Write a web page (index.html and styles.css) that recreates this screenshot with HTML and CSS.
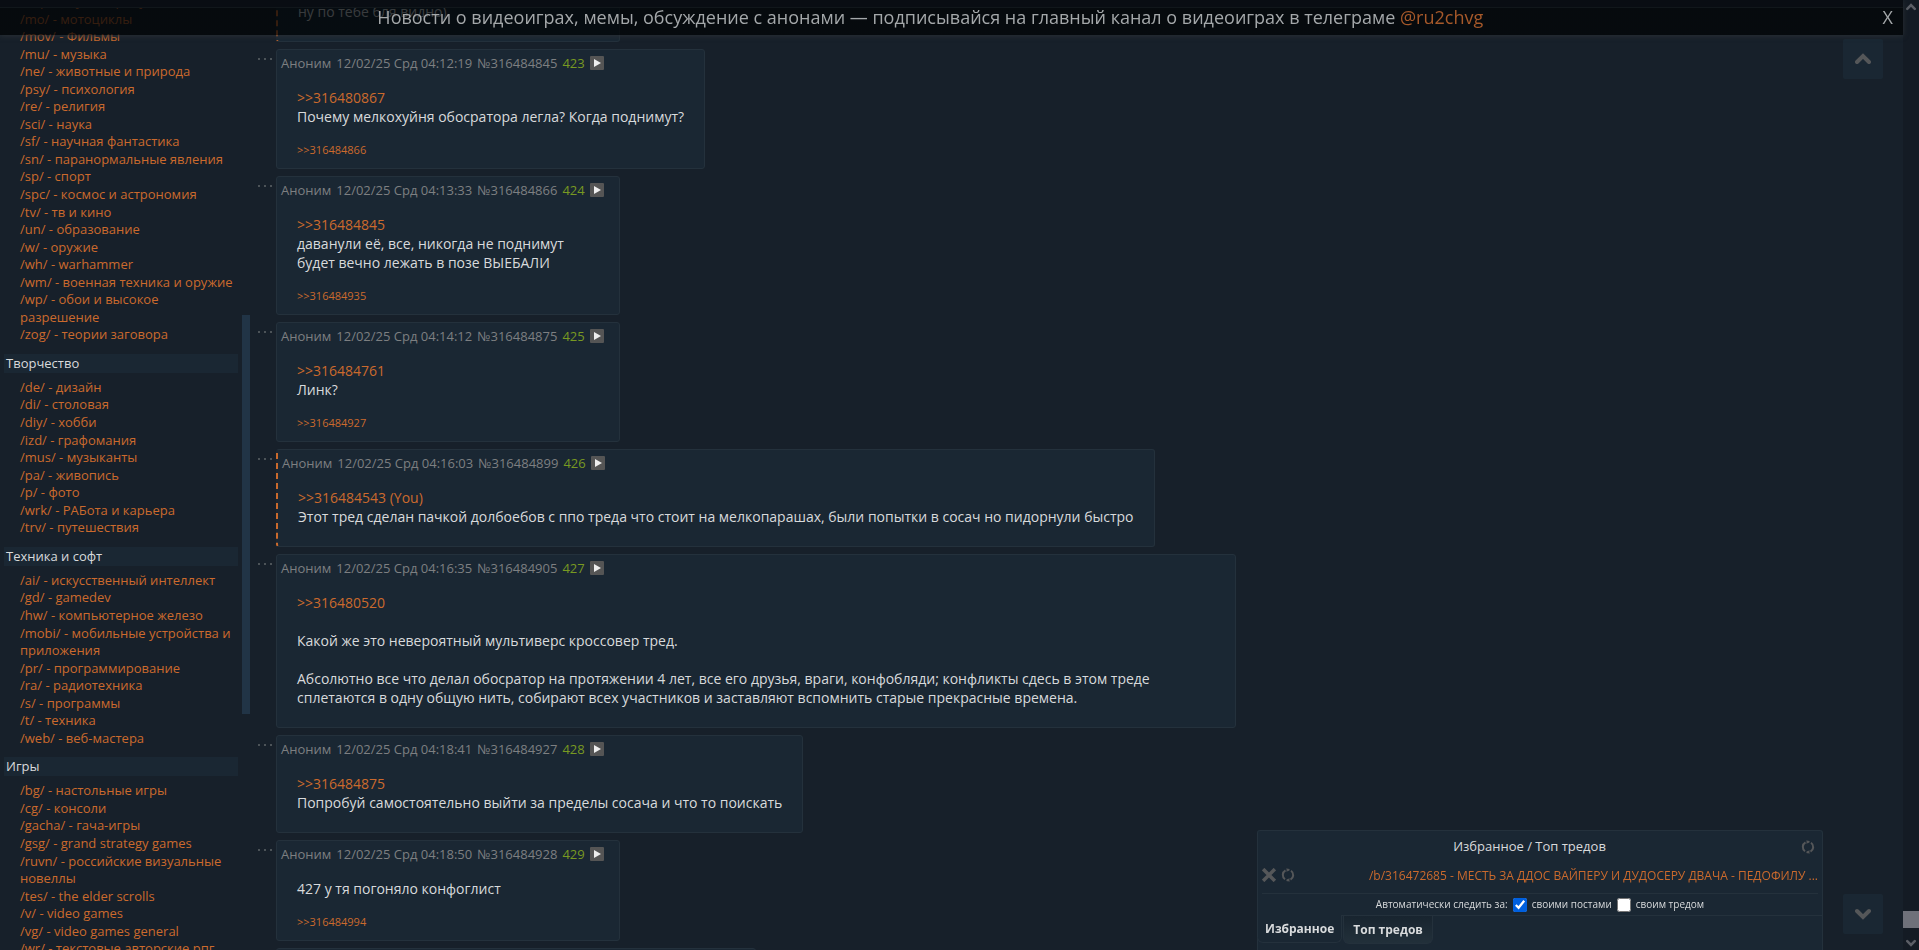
FILE: index.html
```html
<!DOCTYPE html>
<html lang="ru">
<head>
<meta charset="utf-8">
<title>Тред</title>
<link rel="stylesheet" href="styles.css">
</head>
<body>
<svg class="defs" aria-hidden="true">
  <symbol id="i-play" viewBox="0 0 14 14"><rect width="14" height="14" rx="1" fill="#555"/><path d="M4 3v8l7-4z" fill="#eee"/></symbol>
  <symbol id="i-dots" viewBox="0 0 16 4"><path d="M1 1h2v2H1zM7 1h2v2H7zM13 1h2v2h-2z" fill="#4c5358"/></symbol>
  <symbol id="i-refresh" viewBox="0 0 14 14"><g fill="none" stroke="currentColor" stroke-width="2"><path d="M4.500 2.400A5.200 5.200 0 0 0 4 11.200"/><path d="M9.500 11.600A5.200 5.200 0 0 0 10 2.800"/><path d="M6 1.900A5.200 5.200 0 0 1 8.400 2"/><path d="M5.600 12A5.200 5.200 0 0 0 8 12.100"/></g><path d="M5.600 0v4L8 2zM8.400 14v-4L6 12z" fill="currentColor"/></symbol>
  <symbol id="i-cross" viewBox="0 0 12 12"><path d="M2 2l8 8M10 2l-8 8" fill="none" stroke="currentColor" stroke-width="3" stroke-linecap="square"/></symbol>
  <symbol id="i-up" viewBox="0 0 16 12"><path d="M2 9l6-6 6 6" fill="none" stroke="currentColor" stroke-width="4" stroke-linecap="round"/></symbol>
  <symbol id="i-down" viewBox="0 0 16 12"><path d="M2 3l6 6 6-6" fill="none" stroke="currentColor" stroke-width="4" stroke-linecap="round"/></symbol>
</svg>

<header class="promo">
  <p class="promo-text">Новости о видеоиграх, мемы, обсуждение с анонами — подписывайся на главный канал о видеоиграх в телеграме <a href="#">@ru2chvg</a></p>
  <button class="promo-close" type="button">X</button>
</header>

<div class="page">
  <nav class="boards">
    <div class="boards-scroll">
      <ul>
        <li><a href="#">/mlp/ - my little pony</a></li>
        <li><a href="#">/mo/ - мотоциклы</a></li>
        <li><a href="#">/mov/ - Фильмы</a></li>
        <li><a href="#">/mu/ - музыка</a></li>
        <li><a href="#">/ne/ - животные и природа</a></li>
        <li><a href="#">/psy/ - психология</a></li>
        <li><a href="#">/re/ - религия</a></li>
        <li><a href="#">/sci/ - наука</a></li>
        <li><a href="#">/sf/ - научная фантастика</a></li>
        <li><a href="#">/sn/ - паранормальные явления</a></li>
        <li><a href="#">/sp/ - спорт</a></li>
        <li><a href="#">/spc/ - космос и астрономия</a></li>
        <li><a href="#">/tv/ - тв и кино</a></li>
        <li><a href="#">/un/ - образование</a></li>
        <li><a href="#">/w/ - оружие</a></li>
        <li><a href="#">/wh/ - warhammer</a></li>
        <li><a href="#">/wm/ - военная техника и оружие</a></li>
        <li><a href="#">/wp/ - обои и высокое разрешение</a></li>
        <li><a href="#">/zog/ - теории заговора</a></li>
      </ul>
      <h2>Творчество</h2>
      <ul>
        <li><a href="#">/de/ - дизайн</a></li>
        <li><a href="#">/di/ - столовая</a></li>
        <li><a href="#">/diy/ - хобби</a></li>
        <li><a href="#">/izd/ - графомания</a></li>
        <li><a href="#">/mus/ - музыканты</a></li>
        <li><a href="#">/pa/ - живопись</a></li>
        <li><a href="#">/p/ - фото</a></li>
        <li><a href="#">/wrk/ - РАБота и карьера</a></li>
        <li><a href="#">/trv/ - путешествия</a></li>
      </ul>
      <h2>Техника и софт</h2>
      <ul>
        <li><a href="#">/ai/ - искусственный интеллект</a></li>
        <li><a href="#">/gd/ - gamedev</a></li>
        <li><a href="#">/hw/ - компьютерное железо</a></li>
        <li><a href="#">/mobi/ - мобильные устройства и приложения</a></li>
        <li><a href="#">/pr/ - программирование</a></li>
        <li><a href="#">/ra/ - радиотехника</a></li>
        <li><a href="#">/s/ - программы</a></li>
        <li><a href="#">/t/ - техника</a></li>
        <li><a href="#">/web/ - веб-мастера</a></li>
      </ul>
      <h2>Игры</h2>
      <ul>
        <li><a href="#">/bg/ - настольные игры</a></li>
        <li><a href="#">/cg/ - консоли</a></li>
        <li><a href="#">/gacha/ - гача-игры</a></li>
        <li><a href="#">/gsg/ - grand strategy games</a></li>
        <li><a href="#">/ruvn/ - российские визуальные новеллы</a></li>
        <li><a href="#">/tes/ - the elder scrolls</a></li>
        <li><a href="#">/v/ - video games</a></li>
        <li><a href="#">/vg/ - video games general</a></li>
        <li><a href="#">/wr/ - текстовые авторские рпг</a></li>
      </ul>
    </div>
    <span class="boards-thumb"></span>
  </nav>

  <main class="thread">
    <div class="row row-first">
      <article class="post post-reply">
        <div class="message">ну по тебе бля видно)</div>
      </article>
    </div>

    <div class="row">
      <button class="menu" type="button" aria-label="Меню поста"><svg><use href="#i-dots"/></svg></button>
      <article class="post">
        <div class="details"><span>Аноним</span><span>12/02/25 Срд 04:12:19</span><span>№316484845</span><b>423</b><button type="button" aria-label="Ответить"><svg><use href="#i-play"/></svg></button></div>
        <div class="message"><a href="#">&gt;&gt;316480867</a><br>Почему мелкохуйня обосратора легла? Когда поднимут?</div>
        <div class="refs"><a href="#">&gt;&gt;316484866</a></div>
      </article>
    </div>

    <div class="row">
      <button class="menu" type="button" aria-label="Меню поста"><svg><use href="#i-dots"/></svg></button>
      <article class="post">
        <div class="details"><span>Аноним</span><span>12/02/25 Срд 04:13:33</span><span>№316484866</span><b>424</b><button type="button" aria-label="Ответить"><svg><use href="#i-play"/></svg></button></div>
        <div class="message"><a href="#">&gt;&gt;316484845</a><br>даванули её, все, никогда не поднимут<br>будет вечно лежать в позе ВЫЕБАЛИ</div>
        <div class="refs"><a href="#">&gt;&gt;316484935</a></div>
      </article>
    </div>

    <div class="row">
      <button class="menu" type="button" aria-label="Меню поста"><svg><use href="#i-dots"/></svg></button>
      <article class="post">
        <div class="details"><span>Аноним</span><span>12/02/25 Срд 04:14:12</span><span>№316484875</span><b>425</b><button type="button" aria-label="Ответить"><svg><use href="#i-play"/></svg></button></div>
        <div class="message"><a href="#">&gt;&gt;316484761</a><br>Линк?</div>
        <div class="refs"><a href="#">&gt;&gt;316484927</a></div>
      </article>
    </div>

    <div class="row">
      <button class="menu" type="button" aria-label="Меню поста"><svg><use href="#i-dots"/></svg></button>
      <article class="post post-reply">
        <div class="details"><span>Аноним</span><span>12/02/25 Срд 04:16:03</span><span>№316484899</span><b>426</b><button type="button" aria-label="Ответить"><svg><use href="#i-play"/></svg></button></div>
        <div class="message"><a href="#">&gt;&gt;316484543 (You)</a><br>Этот тред сделан пачкой долбоебов с ппо треда что стоит на мелкопарашах, были попытки в сосач но пидорнули быстро</div>
      </article>
    </div>

    <div class="row">
      <button class="menu" type="button" aria-label="Меню поста"><svg><use href="#i-dots"/></svg></button>
      <article class="post">
        <div class="details"><span>Аноним</span><span>12/02/25 Срд 04:16:35</span><span>№316484905</span><b>427</b><button type="button" aria-label="Ответить"><svg><use href="#i-play"/></svg></button></div>
        <div class="message"><a href="#">&gt;&gt;316480520</a><br><br>Какой же это невероятный мультиверс кроссовер тред.<br><br>Абсолютно все что делал обосратор на протяжении 4 лет, все его друзья, враги, конфобляди; конфликты сдесь в этом треде сплетаются в одну общую нить, собирают всех участников и заставляют вспомнить старые прекрасные времена.</div>
      </article>
    </div>

    <div class="row">
      <button class="menu" type="button" aria-label="Меню поста"><svg><use href="#i-dots"/></svg></button>
      <article class="post">
        <div class="details"><span>Аноним</span><span>12/02/25 Срд 04:18:41</span><span>№316484927</span><b>428</b><button type="button" aria-label="Ответить"><svg><use href="#i-play"/></svg></button></div>
        <div class="message"><a href="#">&gt;&gt;316484875</a><br>Попробуй самостоятельно выйти за пределы сосача и что то поискать</div>
      </article>
    </div>

    <div class="row">
      <button class="menu" type="button" aria-label="Меню поста"><svg><use href="#i-dots"/></svg></button>
      <article class="post">
        <div class="details"><span>Аноним</span><span>12/02/25 Срд 04:18:50</span><span>№316484928</span><b>429</b><button type="button" aria-label="Ответить"><svg><use href="#i-play"/></svg></button></div>
        <div class="message">427 у тя погоняло конфоглист</div>
        <div class="refs"><a href="#">&gt;&gt;316484994</a></div>
      </article>
    </div>

    <div class="row">
      <article class="post post-next"></article>
    </div>
  </main>

  <div class="scrollbar"><svg><use href="#i-up"/></svg><span class="scrollbar-thumb"></span><svg><use href="#i-down"/></svg></div>
</div>

<button class="jump jump-up" type="button" aria-label="Вверх"><svg><use href="#i-up"/></svg></button>
<button class="jump jump-down" type="button" aria-label="Вниз"><svg><use href="#i-down"/></svg></button>

<section class="fav">
  <div class="fav-head"><h2>Избранное / Топ тредов</h2><button type="button" aria-label="Обновить"><svg class="ico"><use href="#i-refresh"/></svg></button></div>
  <div class="fav-item">
    <button type="button" aria-label="Удалить"><svg class="ico"><use href="#i-cross"/></svg></button>
    <button type="button" aria-label="Обновить тред"><svg class="ico"><use href="#i-refresh"/></svg></button>
    <a href="#">/b/316472685 - МЕСТЬ ЗА ДДОС ВАЙПЕРУ И ДУДОСЕРУ ДВАЧА - ПЕДОФИЛУ ...</a>
  </div>
  <div class="fav-auto">
    <span>Автоматически следить за:</span>
    <input type="checkbox" id="own-posts" checked><label for="own-posts">своими постами</label>
    <input type="checkbox" id="own-thread"><label for="own-thread">своим тредом</label>
  </div>
  <div class="tabs"><button class="tab" type="button">Избранное</button><button class="tab tab-alt" type="button">Топ тредов</button></div>
</section>
</body>
</html>
```
FILE: styles.css
```css
* { box-sizing: border-box; }

:root {
  --bg: #17202a;
  --box: #1a2733;
  --line: #24313c;
  --text: #d8dadc;
  --link: #cb6a2d;
  --dim: #7d7f81;
  --icon: #555759;
}

html, body { height: 100%; }

body {
  margin: 0;
  overflow: hidden;
  background: var(--bg);
  color: var(--text);
  font: 14px/19px "Trebuchet MS", "Open Sans", sans-serif;
}

a { color: var(--link); text-decoration: none; }
button { padding: 0; border: 0; background: none; font: inherit; color: inherit; cursor: pointer; }
svg { display: block; }
h2 { margin: 0; font-weight: normal; }
.defs { position: absolute; width: 0; height: 0; }

.page { display: flex; height: 100vh; overflow: hidden; }

/* announcement strip over the page */
.promo {
  position: fixed;
  z-index: 3;
  top: 0;
  left: 0;
  right: 16px;
  height: 35px;
  padding: 0 10px;
  display: flex;
  align-items: center;
  background: linear-gradient(#090d13 7px, #11171b 7px, #11171b 8px, rgba(0, 3, 5, .74) 8px);
  box-shadow: 0 1px 5px #2a3034;
  color: #a4a8aa;
  font-size: 18px;
  line-height: 35px;
}
.promo-text { flex: 1; margin: 0; padding-right: 32px; text-align: center; }
.promo-text a { color: #a6592a; }

/* board list */
.boards { position: relative; flex: none; width: 250px; height: 100%; overflow: hidden; }
.boards-scroll { margin-top: -7px; padding: 0 12px 0 4px; }
.boards ul { margin: 0; padding: 0 0 10px 16px; list-style: none; font-size: 13px; line-height: 1.35; }
.boards h2 {
  margin-bottom: 6px;
  padding-left: 2px;
  background: var(--box);
  font-size: 13px;
  line-height: 19px;
}
.boards-thumb { position: absolute; right: 0; top: 315px; width: 8px; height: 399px; background: #213446; }

/* posts */
.thread { flex: 1; min-width: 0; padding-left: 7px; }
.row { display: flex; align-items: flex-start; margin-bottom: 7px; padding-left: 19px; }
.row-first { margin-top: -14px; }
.menu { width: 16px; margin: 8px 3px 0 -19px; }
.menu svg { width: 16px; height: 4px; }
.post {
  min-width: 344px;
  max-width: 960px;
  padding: 0 20px;
  border: 1px solid var(--line);
  border-radius: 3px;
  background: var(--box);
}
.post-reply { border-left: 2px dashed var(--link); }
.post-next { height: 60px; width: 480px; }
.details {
  display: flex;
  align-items: center;
  gap: 5px;
  height: 26px;
  margin: 0 -16px 12px;
  color: var(--dim);
  font-size: 13px;
}
.details b { color: #789922; font-weight: normal; }
.details svg { width: 14px; height: 14px; }
.message { padding-bottom: 20px; }
.row-first .message { padding-top: 15px; }
.refs { margin-top: -5px; padding-bottom: 10px; font-size: 11px; line-height: 17px; }

/* window scrollbar */
.scrollbar {
  flex: none;
  width: 16px;
  padding: 3px 0;
  display: flex;
  flex-direction: column;
  align-items: center;
  background: #141b24;
  color: #5b5e66;
}
.scrollbar svg { width: 10px; height: 8px; }
.scrollbar-thumb { width: 16px; height: 17px; margin: auto 0 11px; background: #6f717a; }

.jump {
  position: fixed;
  z-index: 2;
  right: 36px;
  width: 40px;
  height: 40px;
  display: grid;
  place-items: center;
  border-radius: 2px;
  background: var(--box);
  color: var(--icon);
}
.jump svg { width: 16px; height: 12px; }
.jump-up { top: 39px; }
.jump-down { bottom: 16px; }

/* favourites panel */
.fav {
  position: fixed;
  z-index: 2;
  right: 96px;
  bottom: 0;
  width: 566px;
  height: 120px;
  border: 1px solid var(--line);
  border-bottom: 0;
  border-radius: 3px 3px 0 0;
  background: var(--box);
  font-size: 13px;
}
.ico { width: 14px; height: 14px; color: var(--icon); }
.fav-head { display: flex; align-items: center; height: 31px; padding-right: 7px; }
.fav-head h2 { flex: 1; text-align: center; font-size: 13px; }
.fav-item {
  display: flex;
  align-items: center;
  gap: 5px;
  height: 32px;
  margin: 0 4px;
  padding-bottom: 5px;
  border-bottom: 1px solid var(--line);
}
.fav-item a { margin-left: auto; font-size: 12px; }
.fav-auto {
  display: flex;
  align-items: center;
  justify-content: center;
  gap: 5px;
  height: 21px;
  font-size: 10px;
}
.fav-auto input { width: 14px; height: 14px; margin: 0; accent-color: #0060df; }
.tabs { display: flex; gap: 2px; border-top: 1px solid var(--line); }
.tab {
  height: 28px;
  margin: -1px 0 0 -1px;
  padding: 0 7px;
  border: 1px solid var(--line);
  border-top: 0;
  border-radius: 0 0 6px 6px;
  background: var(--box);
  font-size: 12px;
  font-weight: bold;
}
.tab-alt { margin-top: 0; padding: 0 9px; background: linear-gradient(#18242f, #22303a); }
```
